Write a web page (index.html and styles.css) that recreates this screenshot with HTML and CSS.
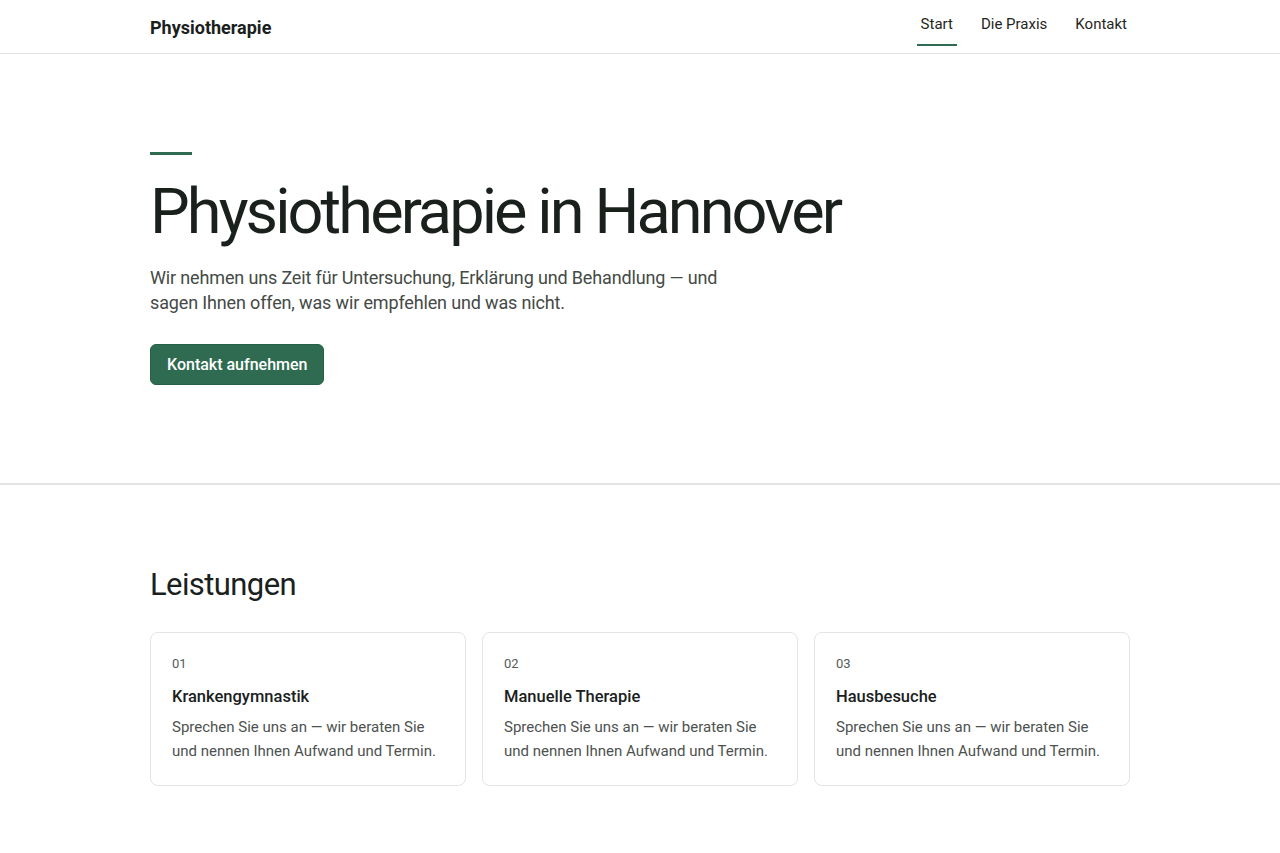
FILE: index.html
```html
<!DOCTYPE html>
<html lang="de">
<head>
<meta charset="utf-8">
<title>Physiotherapie in Hannover</title>
<link rel="stylesheet" href="styles.css">
</head>
<body>
<header class="site-header">
  <div class="container header-inner">
    <a class="brand" href="#">Physiotherapie</a>
    <nav class="nav">
      <a class="nav-link active" href="#">Start</a>
      <a class="nav-link" href="#">Die Praxis</a>
      <a class="nav-link" href="#">Kontakt</a>
    </nav>
  </div>
</header>
<main>
  <section class="hero">
    <div class="container">
      <div class="accent"></div>
      <h1 class="hero-title">Physiotherapie in Hannover</h1>
      <p class="hero-lead">Wir nehmen uns Zeit für Untersuchung, Erklärung und Behandlung — und sagen Ihnen offen, was wir empfehlen und was nicht.</p>
      <a class="btn" href="#">Kontakt aufnehmen</a>
    </div>
  </section>
  <section class="services">
    <div class="container">
      <h2 class="section-title">Leistungen</h2>
      <div class="cards">
        <article class="card">
          <div class="card-num">01</div>
          <h3 class="card-title">Krankengymnastik</h3>
          <p class="card-text">Sprechen Sie uns an — wir beraten Sie und nennen Ihnen Aufwand und Termin.</p>
        </article>
        <article class="card">
          <div class="card-num">02</div>
          <h3 class="card-title">Manuelle Therapie</h3>
          <p class="card-text">Sprechen Sie uns an — wir beraten Sie und nennen Ihnen Aufwand und Termin.</p>
        </article>
        <article class="card">
          <div class="card-num">03</div>
          <h3 class="card-title">Hausbesuche</h3>
          <p class="card-text">Sprechen Sie uns an — wir beraten Sie und nennen Ihnen Aufwand und Termin.</p>
        </article>
      </div>
    </div>
  </section>
</main>
</body>
</html>
```
FILE: styles.css
```css
* { box-sizing: border-box; }
html, body { margin: 0; padding: 0; }
body {
  font-family: Roboto, "Liberation Sans", sans-serif;
  color: #1a211d;
  background: #fff;
}
a { text-decoration: none; color: inherit; }
.container {
  max-width: 980px;
  margin: 0 auto;
}
.site-header {
  border-bottom: 1px solid #e2e2e2;
  height: 54px;
}
.header-inner {
  display: flex;
  justify-content: space-between;
  align-items: stretch;
  height: 53px;
}
.brand {
  font-size: 18px;
  font-weight: 700;
  display: flex;
  align-items: center;
  padding-top: 1px;
  color: #1a211d;
}
.nav {
  display: flex;
  gap: 20px;
  margin-right: -1px;
}
.nav-link {
  font-size: 15px;
  color: #1f2622;
  padding: 15px 4px 0;
  height: 46px;
  border-bottom: 2px solid transparent;
}
.nav-link.active {
  border-bottom-color: #2e6b50;
}
.hero {
  border-bottom: 2px solid #e4e4e2;
  padding: 98px 0 98px;
}
.accent {
  width: 42px;
  height: 3px;
  background: #2e6b50;
}
.hero-title {
  margin: 22px 0 0;
  font-size: 63px;
  font-weight: 400;
  letter-spacing: -2.9px;
  line-height: 1.1;
  color: #1a211d;
}
.hero-lead {
  margin: 19px 0 0;
  max-width: 580px;
  font-size: 18px;
  line-height: 25px;
  letter-spacing: -0.15px;
  color: #444a46;
}
.btn {
  display: inline-block;
  margin-top: 29px;
  background: #2e6b50;
  color: #fff;
  font-size: 16px;
  font-weight: 500;
  padding: 10px 16px;
  border-radius: 6px;
  line-height: 19px;
  border: 1px solid #285f47;
}
.services {
  padding: 82px 0 60px;
}
.section-title {
  margin: 0;
  font-size: 31px;
  font-weight: 400;
  letter-spacing: -0.6px;
  line-height: 36px;
  color: #1a211d;
}
.cards {
  margin-top: 29px;
  display: grid;
  grid-template-columns: repeat(3, 1fr);
  gap: 16px;
}
.card {
  border: 1px solid #e4e4e4;
  border-radius: 8px;
  padding: 23px 21px 22px;
}
.card-num {
  font-size: 13px;
  color: #555b57;
  line-height: 16px;
}
.card-title {
  margin: 15px 0 0;
  font-size: 16.5px;
  font-weight: 500;
  line-height: 20px;
  color: #1a211d;
}
.card-text {
  margin: 8px 0 0;
  font-size: 15px;
  line-height: 24px;
  color: #4d524f;
}
```
